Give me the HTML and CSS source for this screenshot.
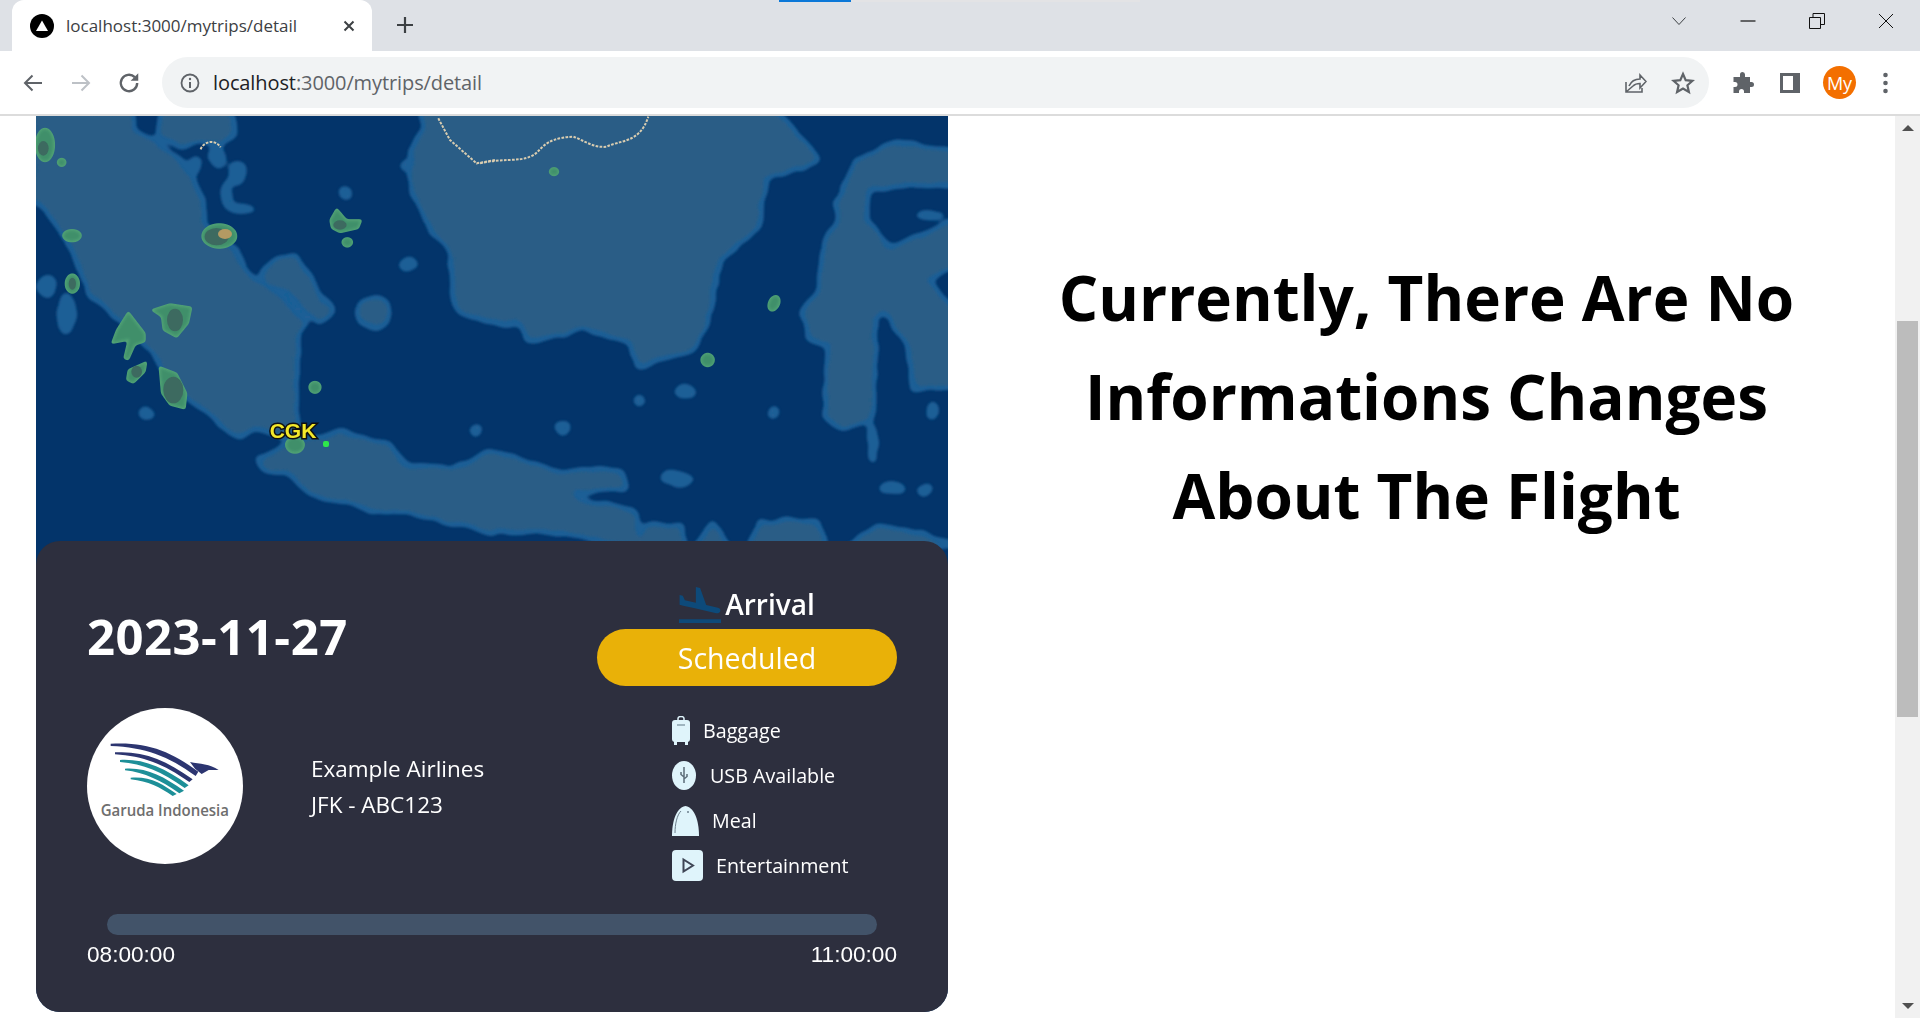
FILE: index.html
```html
<!DOCTYPE html>
<html lang="en">
<head>
  <meta charset="UTF-8">
  <meta name="viewport" content="width=device-width, initial-scale=1.0">
  <title>localhost:3000/mytrips/detail</title>
  <link rel="stylesheet" href="styles.css">
</head>
<body>
  <div class="tabstrip">
    <div class="load-line"><span class="load-done"></span></div>
    <div class="tab">
      <svg class="favicon" viewBox="0 0 24 24"><circle cx="12" cy="12" r="12" fill="#000"/><path d="M12 6.5L18 17H6z" fill="#fff"/></svg>
      <span class="tab-title">localhost:3000/mytrips/detail</span>
      <svg class="tab-close" viewBox="0 0 12 12"><path d="M1.5 1.5l9 9M10.5 1.5l-9 9" stroke="#3c4043" stroke-width="2" fill="none"/></svg>
    </div>
    <svg class="new-tab" viewBox="0 0 18 18"><path d="M9 1v16M1 9h16" stroke="#3c4043" stroke-width="2.2" fill="none"/></svg>
    <div class="window-controls">
      <svg class="win-icon" viewBox="0 0 16 16"><path d="M1.5 4.5L8 11.5l6.5-7" stroke="#3c4043" fill="none"/></svg>
      <svg class="win-icon" viewBox="0 0 16 16"><path d="M0.5 8h15" stroke="#111" fill="none" stroke-width="1.2"/></svg>
      <svg class="win-icon" viewBox="0 0 16 16"><path d="M.5 4.5h11v11H.5zM4 4.5V.5h11.5v11h-4" stroke="#111" fill="none"/></svg>
      <svg class="win-icon" viewBox="0 0 16 16"><path d="M1 1l14 14M15 1L1 15" stroke="#111" fill="none"/></svg>
    </div>
  </div>

  <div class="toolbar">
    <svg class="nav-icon" viewBox="0 0 24 24"><path d="M21 12H4M11.5 4.5L4 12l7.5 7.5" stroke="#5f6368" stroke-width="2" fill="none"/></svg>
    <svg class="nav-icon" viewBox="0 0 24 24"><path d="M3 12h17M12.5 4.5L20 12l-7.5 7.5" stroke="#bdc1c6" stroke-width="2" fill="none"/></svg>
    <svg class="nav-icon" viewBox="1 1 22 22"><path d="M19.5 12a7.5 7.5 0 1 1-2.2-5.3" stroke="#5f6368" stroke-width="2.2" fill="none"/><path d="M20.5 3v7h-7z" fill="#5f6368"/></svg>
    <div class="omnibox">
      <svg class="info-icon" viewBox="0 0 20 20"><circle cx="10" cy="10" r="8.5" stroke="#5f6368" stroke-width="1.8" fill="none"/><path d="M10 9v6" stroke="#5f6368" stroke-width="2"/><circle cx="10" cy="6" r="1.2" fill="#5f6368"/></svg>
      <span class="url"><span class="url-host">localhost</span>:3000/mytrips/detail</span>
      <svg class="omni-icon share-icon" viewBox="0 0 24 24"><path d="M3 11v10h16v-4M3 21l7-6c1.5-1.500 4-2.500 7-2.500V17l6-6.500L17 4v4c-5 0-9 2.500-11 7" stroke="#5f6368" stroke-width="1.6" fill="none"/></svg>
      <svg class="omni-icon" viewBox="0 0 24 24"><path d="M12 3l2.700 6.200 6.800.6-5.100 4.500 1.500 6.700L12 17.500 6.100 21l1.500-6.700-5.100-4.500 6.800-.6z" stroke="#5f6368" stroke-width="2.200" fill="none"/></svg>
    </div>
    <div class="toolbar-right">
      <svg class="ext-icon" viewBox="0 0 24 24"><path d="M9 3.500a2.500 2.500 0 0 1 5 0V6h5v5h1.500a2.500 2.500 0 0 1 0 5H19v6h-6v-1.500a2.500 2.500 0 0 0-5 0V22H2.500v-6H4a2.500 2.500 0 0 0 0-5H2.500V6H9z" fill="#5f6368"/></svg>
      <svg class="ext-icon panel-icon" viewBox="0 0 24 24"><path d="M2 2h20v20H2zM5 5v14h10V5z" fill="#5f6368" fill-rule="evenodd"/></svg>
      <span class="avatar">My</span>
      <svg class="ext-icon dots-icon" viewBox="0 0 6 24"><circle cx="3" cy="4" r="2.300" fill="#5f6368"/><circle cx="3" cy="12" r="2.300" fill="#5f6368"/><circle cx="3" cy="20" r="2.300" fill="#5f6368"/></svg>
    </div>
  </div>

  <div class="viewport">
    <main class="page">
      <section class="flight-panel">
        <svg class="map" viewBox="36 116 912 896" preserveAspectRatio="none">
          <defs>
            <filter id="soft"><feGaussianBlur stdDeviation="0.7"/></filter>
            <filter id="blob" x="-5%" y="-5%" width="110%" height="110%">
              <feGaussianBlur stdDeviation="1.8"/>
              <feComponentTransfer>
                <feFuncA type="linear" slope="4" intercept="-1.4"/>
              </feComponentTransfer>
              <feGaussianBlur stdDeviation="0.5"/>
            </filter>
            <filter id="coastline" x="-5%" y="-5%" width="110%" height="110%">
              <feTurbulence type="fractalNoise" baseFrequency="0.05" numOctaves="3" seed="4" result="noise"/>
              <feDisplacementMap in="SourceGraphic" in2="noise" scale="9" xChannelSelector="R" yChannelSelector="G"/>
              <feGaussianBlur stdDeviation="3"/>
              <feComponentTransfer>
                <feFuncA type="linear" slope="5" intercept="-2"/>
              </feComponentTransfer>
              <feGaussianBlur stdDeviation="0.8"/>
            </filter>
            <g id="landmass">
              <g transform="translate(20 110) scale(.3333)">
                <path d="M40 10L330 10L335 60L400 100L470 150L510 200L540 270L545 350L640 420L670 490L730 535L790 570L850 640L825 690L822 900L830 960L790 975L700 945L660 975L600 930L500 850L400 720L300 620L210 540L170 430L100 320L40 255Z"/>
                <path d="M430 10L625 10L640 70L600 100L540 90L480 100L420 70Z"/>
                <path d="M730 490L780 445L825 445L860 505L900 575L930 600L900 635L860 600L810 540L740 520Z"/>
                <circle cx="1062" cy="608" r="42"/>
                <path d="M720 1050L800 1010L830 1000L900 990L960 970L1100 1010L1150 1070L1300 1080L1420 1030L1420 1265L1200 1210L1050 1190L880 1150L800 1080L740 1075Z"/>
              </g>
              <g transform="scale(.3333)">
                <path d="M1266 330L1281 381L1239 450L1239 570L1290 669L1359 759L1371 921L1470 960L1569 960L1590 1020L1740 981L1890 1020L1920 1089L2079 1041L2130 930L2151 780L2271 681L2289 531L2451 480L2319 330Z"/>
              </g>
              <g transform="translate(480 110) scale(.3333)">
                <path d="M0 1040L40 1030L250 1095L420 1085L430 1130L280 1140L280 1170L460 1210L480 1310L300 1270L0 1250Z"/>
                <path d="M470 1310L500 1255L600 1250L610 1310Z"/>
                <path d="M650 1310L700 1250L740 1310Z"/>
                <path d="M820 1310L840 1240L1010 1240L1030 1310Z"/>
                <path d="M1100 1310L1200 1255L1290 1270L1420 1310Z"/>
                <path d="M1430 130L1240 100L1130 160L1080 270L1080 340L1040 400L1020 540L975 600L985 680L1060 700L1040 920L1090 950L1170 930L1180 620L1210 590L1240 630L1290 700L1310 830L1430 820L1430 610L1330 510L1430 460L1430 340L1230 420L1150 330L1160 230L1430 215Z"/>
              </g>
            </g>
          </defs>
          <rect x="36" y="116" width="912" height="896" fill="#03346a"/>
          <g class="shoal-group" filter="url(#coastline)">
            <use href="#landmass" class="coast"/>
            <g transform="translate(20 110) scale(.3333)">
              <ellipse cx="978" cy="250" rx="22" ry="22"/>
              <ellipse cx="1165" cy="465" rx="32" ry="20"/>
              <ellipse cx="1150" cy="170" rx="16" ry="18"/>
              <ellipse cx="380" cy="910" rx="28" ry="20"/>
              <ellipse cx="80" cy="530" rx="30" ry="36"/>
              <ellipse cx="140" cy="615" rx="30" ry="62"/>
              <ellipse cx="1365" cy="962" rx="20" ry="22"/>
              <ellipse cx="440" cy="150" rx="40" ry="24"/>
              <ellipse cx="525" cy="165" rx="22" ry="30"/>
              <ellipse cx="590" cy="140" rx="32" ry="32"/>
              <ellipse cx="650" cy="190" rx="28" ry="40"/>
              <ellipse cx="665" cy="295" rx="48" ry="18"/>
              <ellipse cx="620" cy="255" rx="18" ry="48"/>
            </g>
            <g transform="translate(480 110) scale(.3333)">
              <ellipse cx="478" cy="872" rx="22" ry="22"/>
              <ellipse cx="615" cy="846" rx="36" ry="20"/>
              <ellipse cx="248" cy="956" rx="24" ry="24"/>
              <ellipse cx="878" cy="908" rx="22" ry="22"/>
              <ellipse cx="590" cy="1105" rx="52" ry="26"/>
              <ellipse cx="1180" cy="1000" rx="18" ry="60"/>
              <ellipse cx="1235" cy="1135" rx="42" ry="20"/>
              <ellipse cx="1338" cy="1140" rx="24" ry="24"/>
              <ellipse cx="1355" cy="905" rx="20" ry="30"/>
              <ellipse cx="1350" cy="315" rx="50" ry="16"/>
            </g>
          </g>
          <g filter="url(#coastline)">
            <use href="#landmass" class="land"/>
          </g>
          <g filter="url(#blob)">
            <g class="storm" transform="translate(20 110) scale(.3333)">
              <ellipse cx="75" cy="105" rx="28" ry="50"/>
              <ellipse cx="125" cy="157" rx="13" ry="12"/>
              <ellipse cx="156" cy="377" rx="28" ry="18"/>
              <ellipse cx="157" cy="521" rx="21" ry="29"/>
              <path d="M395 600L450 582L515 592L505 640L470 682L430 660L425 620Z"/>
              <path d="M325 605L375 670L375 695L345 705L325 750L312 745L325 690L275 700L290 660Z"/>
              <path d="M325 780L380 755L375 785L340 820L320 810Z"/>
              <path d="M418 770L470 790L500 850L495 897L450 885L425 850Z"/>
              <ellipse cx="598" cy="378" rx="52" ry="36"/>
              <path d="M930 330L950 295L980 330L1025 330L1015 355L960 368L935 355Z"/>
              <ellipse cx="982" cy="397" rx="16" ry="14"/>
              <ellipse cx="885" cy="832" rx="18" ry="18"/>
              <ellipse cx="825" cy="1005" rx="28" ry="24"/>
            </g>
            <g class="storm" transform="translate(480 110) scale(.3333)">
              <ellipse cx="222" cy="185" rx="14" ry="12"/>
              <ellipse cx="882" cy="580" rx="16" ry="25" transform="rotate(25 882 580)"/>
              <ellipse cx="683" cy="750" rx="20" ry="20"/>
            </g>
          </g>
          <g filter="url(#soft)">
            <g class="storm-core" transform="translate(20 110) scale(.3333)">
              <ellipse cx="70" cy="115" rx="16" ry="22"/>
              <ellipse cx="157" cy="521" rx="11" ry="18"/>
              <ellipse cx="465" cy="630" rx="24" ry="34"/>
              <ellipse cx="460" cy="840" rx="30" ry="40"/>
              <ellipse cx="350" cy="785" rx="16" ry="18"/>
              <ellipse cx="590" cy="380" rx="36" ry="26"/>
              <ellipse cx="960" cy="345" rx="20" ry="14"/>
            </g>
            <ellipse cx="225" cy="234" rx="7" ry="5" fill="#b39a63"/>
            <g class="border-line" transform="translate(20 110) scale(.3333)">
              <path d="M542 118C550 95 585 85 602 112"/>
              <path d="M1255 25L1290 90L1370 160L1425 150"/>
            </g>
            <g class="border-line" transform="translate(480 110) scale(.3333)">
              <path d="M0 160C60 145 120 155 150 140C190 125 180 85 280 80C310 90 340 115 380 110C420 90 480 100 505 20"/>
            </g>
          </g>
          <rect x="323" y="441" width="6" height="6" rx="2" fill="#2ee84a"/>
          <text class="map-label" x="293" y="438" text-anchor="middle">CGK</text>
        </svg>

        <div class="card">
          <div class="card-body">
            <div class="card-left">
              <h2 class="flight-date">2023-11-27</h2>
              <div class="airline">
                <svg class="airline-logo" viewBox="81 54 468 468">
                  <circle cx="315" cy="288" r="234" fill="#fff"/>
                  <path d="M152 161C260 155 330 182 415 245L407 258C325 198 255 172 152 168Z" fill="#2c3570"/>
                  <path d="M165 187C250 182 315 208 398 268L388 276C310 222 250 198 165 193Z" fill="#2c3570"/>
                  <path d="M180 210C250 206 312 232 386 286L374 294C305 245 250 222 180 216Z" fill="#1d8f98"/>
                  <path d="M195 236C260 232 308 258 372 302L358 310C300 270 255 248 195 241Z" fill="#1d8f98"/>
                  <path d="M212 263C270 258 308 282 350 312L338 318C300 292 265 274 212 268Z" fill="#1d8f98"/>
                  <path d="M390 216C420 222 450 222 476 240L446 240L425 252L405 236Z" fill="#2c3570"/>
                  <text class="logo-text" x="122" y="378" textLength="385" lengthAdjust="spacingAndGlyphs">Garuda Indonesia</text>
                </svg>
                <div class="airline-text">
                  <div>Example Airlines</div>
                  <div>JFK - ABC123</div>
                </div>
              </div>
            </div>

            <div class="card-right">
              <div class="direction">
                <svg class="direction-icon" viewBox="2.500 2 19 19" preserveAspectRatio="none"><path d="M2.500 19h19v2h-19v-2zm7.180-5.730l4.350 1.160 5.310 1.420c.8.210 1.620-.260 1.840-1.060.210-.8-.260-1.620-1.060-1.840l-5.310-1.420-2.760-9.020L10.120 2v8.280L5.150 8.950l-.930-2.320-1.450-.390v5.170l1.600.430 5.310 1.430z" fill="#0d4a7a"/></svg>
                <span>Arrival</span>
              </div>
              <div class="status-pill">Scheduled</div>
              <ul class="amenities">
                <li class="amenity">
                  <svg class="amenity-icon icon-bag" viewBox="0 0 18 29"><path d="M6 5V2.500C6 1 7 .5 9 .5s3 .5 3 2V5" stroke="#dff4fb" stroke-width="1.500" fill="none"/><rect y="4" width="18" height="22" rx="3" fill="#dff4fb"/><rect x="2" y="25" width="3" height="4" fill="#dff4fb"/><rect x="13" y="25" width="3" height="4" fill="#dff4fb"/><path d="M5 9h8" stroke="#8aa0ad" stroke-width="1.500"/></svg>
                  <span>Baggage</span>
                </li>
                <li class="amenity">
                  <svg class="amenity-icon icon-usb" viewBox="0 0 24 29"><ellipse cx="12" cy="14.500" rx="12" ry="14.500" fill="#dff4fb"/><path d="M12 6v16M12 16l-3-2.500V11M12 18l3-2.500V13" stroke="#5b6b78" stroke-width="1.500" fill="none"/></svg>
                  <span>USB Available</span>
                </li>
                <li class="amenity">
                  <svg class="amenity-icon icon-meal" viewBox="0 0 27 30"><path d="M0 30C0 18 3 2 13.500 0 24 2 27 18 27 30z" fill="#dff4fb"/><path d="M3 27C3 18 5 9 9 5" stroke="#6d7f8c" stroke-width="1" fill="none"/><circle cx="16" cy="6" r="1" fill="#6d7f8c"/></svg>
                  <span>Meal</span>
                </li>
                <li class="amenity">
                  <svg class="amenity-icon icon-play" viewBox="0 0 31 31"><rect width="31" height="31" rx="4" fill="#dff4fb"/><path d="M11.500 9.500l9.500 6-9.500 6z" stroke="#3f4656" stroke-width="2" fill="none"/></svg>
                  <span>Entertainment</span>
                </li>
              </ul>
            </div>
          </div>

          <div class="progress"></div>
          <div class="times">
            <span>08:00:00</span>
            <span>11:00:00</span>
          </div>
        </div>
      </section>

      <section class="notice">
        <h1 class="notice-title">Currently, There Are No Informations Changes About The Flight</h1>
      </section>
    </main>

    <div class="scrollbar">
      <span class="arrow-up"></span>
      <div class="scroll-thumb"></div>
      <span class="arrow-down"></span>
    </div>
  </div>
</body>
</html>
```

FILE: styles.css
```css
* {
  box-sizing: border-box;
}

body {
  margin: 0;
  height: 1018px;
  overflow: hidden;
  display: flex;
  flex-direction: column;
  font-family: "Open Sans", "Noto Sans", sans-serif;
  background: #fff;
}

/* browser chrome */
.tabstrip {
  position: relative;
  height: 51px;
  flex: none;
  display: flex;
  align-items: flex-end;
  background: #dee1e6;
  padding-left: 12px;
}

.load-line {
  position: absolute;
  left: 779px;
  top: 0;
  width: 361px;
  height: 2px;
  background: #e3e3e5;
}

.load-done {
  display: block;
  width: 72px;
  height: 2px;
  background: #0b78d8;
}

.tab {
  width: 360px;
  height: 51px;
  display: flex;
  align-items: center;
  padding: 0 17px 0 18px;
  background: #fff;
  border-radius: 12px 12px 0 0;
}

.favicon {
  width: 24px;
  height: 24px;
  flex: none;
}

.tab-title {
  margin-left: 12px;
  font: 17px "Open Sans", sans-serif;
  color: #3c4043;
  white-space: nowrap;
}

.tab-close {
  width: 12px;
  height: 12px;
  margin-left: auto;
}

.new-tab {
  width: 18px;
  height: 18px;
  margin: 0 0 17px 24px;
}

.window-controls {
  margin-left: auto;
  display: flex;
  align-items: center;
  gap: 53px;
  padding: 0 26px 22px 0;
}

.win-icon {
  width: 16px;
  height: 16px;
}

.toolbar {
  height: 65px;
  flex: none;
  display: flex;
  align-items: center;
  padding: 0 0 0 21px;
  background: #fff;
  border-bottom: 2px solid #dcdcdc;
}

.nav-icon {
  width: 24px;
  height: 24px;
  margin-right: 24px;
}

.omnibox {
  width: 1547px;
  height: 51px;
  margin-left: -3px;
  display: flex;
  align-items: center;
  padding: 0 14px 0 18px;
  background: #f1f3f4;
  border-radius: 26px;
}

.info-icon {
  width: 20px;
  height: 20px;
}

.url {
  margin-left: 13px;
  font-size: 20px;
  letter-spacing: -0.1px;
  color: #5f6368;
}

.url-host {
  color: #202124;
}

.omni-icon {
  width: 24px;
  height: 24px;
  margin-left: 24px;
}

.share-icon {
  margin-left: auto;
}

.toolbar-right {
  display: flex;
  align-items: center;
  margin-left: 22px;
}

.ext-icon {
  width: 24px;
  height: 24px;
  margin-right: 23px;
}

.panel-icon {
  margin-right: 21px;
}

.avatar {
  width: 33px;
  height: 33px;
  margin-right: 26px;
  display: flex;
  align-items: center;
  justify-content: center;
  border-radius: 50%;
  background: #f36f00;
  color: #fff;
  font-size: 18px;
}

.dots-icon {
  width: 7px;
  margin: 0;
}

/* page */
.viewport {
  flex: 1;
  min-height: 0;
  display: flex;
}

.page {
  flex: 1;
  display: flex;
  padding-left: 36px;
}

.flight-panel {
  position: relative;
  width: 912px;
  height: 896px;
  padding-top: 425px;
}

.map {
  position: absolute;
  left: 0;
  top: 0;
  width: 912px;
  height: 896px;
  border-radius: 0 0 24px 24px;
}

.land {
  fill: #2b5d86;
}

.coast {
  fill: #1d5f96;
  stroke: #1d5f96;
  stroke-width: 30;
  stroke-linejoin: round;
}

.shoal-group {
  fill: #1d5f96;
}

.storm {
  fill: #3f8f6a;
  stroke: #58ab7a;
  stroke-width: 4;
}

.storm-core {
  fill: #3c6a60;
}

.border-line {
  fill: none;
  stroke: #d8ccb0;
  stroke-width: 6;
  stroke-dasharray: 8 4;
}

.map-label {
  font: bold 21px "Liberation Sans", sans-serif;
  fill: #f4e92a;
  stroke: #111;
  stroke-width: 3px;
  paint-order: stroke;
}

.card {
  position: relative;
  height: 471px;
  padding: 0 51px;
  background: #2d2f3e;
  border-radius: 24px;
  color: #fff;
}

.card-body {
  display: flex;
  justify-content: space-between;
  height: 372px;
}

.card-left {
  padding-top: 65px;
}

.flight-date {
  margin: 0;
  font-size: 49px;
  line-height: 60px;
  letter-spacing: 0.5px;
  font-weight: 700;
}

.airline {
  display: flex;
  align-items: center;
  margin-top: 42px;
}

.airline-logo {
  width: 156px;
  height: 156px;
}

.logo-text {
  font: 600 46px "Open Sans", sans-serif;
  fill: #6e6e6e;
}

.airline-text {
  margin: 2px 0 0 68px;
  font-size: 22.5px;
  line-height: 36px;
}

.card-right {
  width: 300px;
  padding-top: 40px;
}

.direction {
  height: 48px;
  padding-bottom: 3px;
  display: flex;
  align-items: center;
  justify-content: center;
  gap: 4px;
  font-size: 28px;
  font-weight: 600;
}

.direction-icon {
  width: 42px;
  height: 36px;
  margin-top: 3px;
}

.status-pill {
  height: 57px;
  display: flex;
  align-items: center;
  justify-content: center;
  background: #e9b108;
  border-radius: 29px;
  font-size: 28.5px;
}

.amenities {
  list-style: none;
  margin: 22px 0 0;
  padding: 0 0 0 75px;
}

.amenity {
  height: 45px;
  display: flex;
  align-items: center;
  font-size: 19.7px;
}

.amenity-icon {
  flex: none;
}

.icon-bag {
  width: 18px;
  height: 29px;
  margin-right: 13px;
}

.icon-usb {
  width: 24px;
  height: 29px;
  margin-right: 14px;
}

.icon-meal {
  width: 27px;
  height: 30px;
  margin-right: 13px;
}

.icon-play {
  width: 31px;
  height: 31px;
  margin-right: 13px;
}

.progress {
  height: 21px;
  margin: 1px 20px 0;
  background: #425369;
  border-radius: 11px;
}

.times {
  display: flex;
  justify-content: space-between;
  margin-top: 5px;
  font: 22.6px/30px "Liberation Sans", sans-serif;
}

.notice {
  flex: 1;
  display: flex;
  justify-content: center;
  padding: 132px 0 0 10px;
}

.notice-title {
  width: 800px;
  margin: 0;
  text-align: center;
  font-size: 62px;
  line-height: 99px;
  font-weight: 700;
  color: #000;
}

/* scrollbar */
.scrollbar {
  position: relative;
  width: 25px;
  flex: none;
  background: #f1f1f1;
}

.scroll-thumb {
  position: absolute;
  left: 2px;
  right: 2px;
  top: 205px;
  height: 396px;
  background: #bcbcbc;
}

.arrow-up,
.arrow-down {
  position: absolute;
  left: 7px;
  width: 0;
  height: 0;
  border-left: 6px solid transparent;
  border-right: 6px solid transparent;
}

.arrow-up {
  top: 9px;
  border-bottom: 6px solid #505050;
}

.arrow-down {
  bottom: 9px;
  border-top: 6px solid #505050;
}
```
